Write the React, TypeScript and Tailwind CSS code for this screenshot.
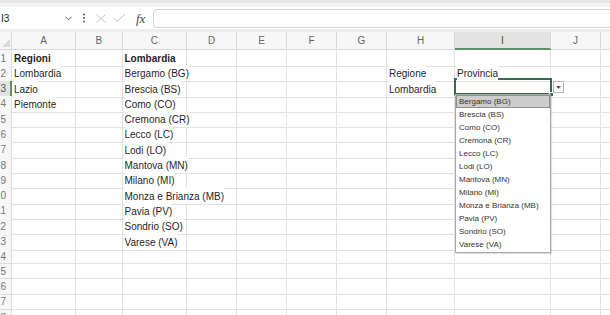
import React from "react";

const GRID =
  "grid grid-cols-[12px_64px_46.5px_64.5px_50px_50px_50px_50px_68px_96px_50px_50px]";

const letters = ["A", "B", "C", "D", "E", "F", "G", "H", "I", "J", "K"];

type Row = { [k: string]: { t: string; b?: boolean } };

const rows: Row[] = [
  { A: { t: "Regioni", b: true }, C: { t: "Lombardia", b: true } },
  { A: { t: "Lombardia" }, C: { t: "Bergamo (BG)" }, H: { t: "Regione" }, I: { t: "Provincia" } },
  { A: { t: "Lazio" }, C: { t: "Brescia (BS)" }, H: { t: "Lombardia" } },
  { A: { t: "Piemonte" }, C: { t: "Como (CO)" } },
  { C: { t: "Cremona (CR)" } },
  { C: { t: "Lecco (LC)" } },
  { C: { t: "Lodi (LO)" } },
  { C: { t: "Mantova (MN)" } },
  { C: { t: "Milano (MI)" } },
  { C: { t: "Monza e Brianza (MB)" } },
  { C: { t: "Pavia (PV)" } },
  { C: { t: "Sondrio (SO)" } },
  { C: { t: "Varese (VA)" } },
  {},
  {},
  {},
  {},
  {},
];

const provinces = [
  "Bergamo (BG)",
  "Brescia (BS)",
  "Como (CO)",
  "Cremona (CR)",
  "Lecco (LC)",
  "Lodi (LO)",
  "Mantova (MN)",
  "Milano (MI)",
  "Monza e Brianza (MB)",
  "Pavia (PV)",
  "Sondrio (SO)",
  "Varese (VA)",
];

function FormulaBar() {
  return (
    <div className="flex h-[22px] items-center bg-white">
      <div className="flex h-full w-[78px] items-center justify-between pl-[1px] pr-[6px]">
        <span className="text-[10px] text-[#222]">I3</span>
        <svg width="7" height="5" viewBox="0 0 7 5" className="mt-[1px]">
          <path d="M0.5 0.8 L3.5 3.8 L6.5 0.8" fill="none" stroke="#555" strokeWidth="1" />
        </svg>
      </div>
      <svg width="4" height="10" viewBox="0 0 4 10" className="ml-[4px]">
        <circle cx="2" cy="1.5" r="0.9" fill="#555" />
        <circle cx="2" cy="5" r="0.9" fill="#555" />
        <circle cx="2" cy="8.5" r="0.9" fill="#555" />
      </svg>
      <svg width="10" height="9" viewBox="0 0 10 9" className="ml-[10px]">
        <path d="M0.5 0.5 L9.5 8.5 M9.5 0.5 L0.5 8.5" fill="none" stroke="#c4c4c4" strokeWidth="1" />
      </svg>
      <svg width="12" height="8" viewBox="0 0 12 8" className="ml-[7px]">
        <path d="M0.5 4 L4 7.5 L11.5 0.5" fill="none" stroke="#c4c4c4" strokeWidth="1" />
      </svg>
      <span className="ml-[11px] font-['Liberation_Serif',serif] text-[13px] italic leading-none text-[#444]">
        fx
      </span>
      <div className="ml-[8px] h-[19px] flex-1 rounded-l-[4px] border border-r-0 border-[#d6d6d6] bg-white" />
    </div>
  );
}

function HeaderRow() {
  return (
    <div className={`${GRID} h-[18px] bg-[#f7f7f7]`}>
      <div className="relative border-b border-r border-[#d8d8d8]">
        <svg width="8" height="8" viewBox="0 0 8 8" className="absolute bottom-[2px] right-[1px]">
          <path d="M8 0 L8 8 L0 8 Z" fill="#dadada" />
        </svg>
      </div>
      {letters.map((l) => {
        const sel = l === "I";
        return (
          <div
            key={l}
            className={
              sel
                ? "flex items-center justify-center border-b-2 border-r border-b-[#5f8f6d] border-r-[#d8d8d8] bg-[#e3e3e3] text-[10px] text-[#444]"
                : "flex items-center justify-center border-b border-r border-[#d8d8d8] text-[10px] text-[#666]"
            }
          >
            {l}
          </div>
        );
      })}
    </div>
  );
}

function DataRow({ row, n }: { row: Row; n: number }) {
  const sel = n === 3;
  return (
    <div className={`${GRID} h-[15.3px]`}>
      <div
        className={
          sel
            ? "flex items-center justify-end overflow-hidden whitespace-nowrap border-b border-r-2 border-b-[#dcdcdc] border-r-[#5f8f6d] bg-[#e3e3e3] pr-[4px] text-[10px] text-[#555]"
            : "flex items-center justify-end overflow-hidden whitespace-nowrap border-b border-r border-[#dcdcdc] bg-[#f7f7f7] pr-[5px] text-[10px] text-[#777]"
        }
      >
        {n}
      </div>
      {letters.map((l) => {
        const c = row[l];
        return (
          <div
            key={l}
            className="flex items-center whitespace-nowrap border-b border-r border-[#e1e1e1] pl-[2px] text-[10px] text-[#1f1f1f]"
          >
            {c ? (
              <span className={c.b ? "relative z-[1] bg-white pt-[1px] font-bold" : "relative z-[1] bg-white pt-[1px]"}>
                {c.t}
              </span>
            ) : null}
          </div>
        );
      })}
    </div>
  );
}

export default function App() {
  return (
    <div className="relative h-[315px] w-[610px] overflow-hidden bg-white font-['Liberation_Sans',Arial,sans-serif]">
      <div className="h-[3px] bg-[#e6e6e6]" />
      <div className="h-[4px] bg-[#f3f3f3]" />
      <FormulaBar />
      <div className="h-[3px] bg-[#eeeeee]" />
      <HeaderRow />
      {rows.map((r, i) => (
        <DataRow key={i} row={r} n={i + 1} />
      ))}

      {/* active cell I3 */}
      <div className="absolute left-[454px] top-[78px] h-[17px] w-[98px] border-2 border-[#2f6e4b]" />
      <div className="absolute left-[549px] top-[92px] h-[5px] w-[5px] border border-white bg-[#2f6e4b]" />

      {/* dropdown button */}
      <div className="absolute left-[553px] top-[81px] flex h-[12px] w-[11px] items-center justify-center border border-[#b5b5b5] bg-white">
        <svg width="5" height="3" viewBox="0 0 5 3">
          <path d="M0 0 L5 0 L2.5 3 Z" fill="#555" />
        </svg>
      </div>

      {/* dropdown list */}
      <div className="absolute left-[455px] top-[94px] w-[96px] border border-[#a8a8a8] bg-white pb-[1px] shadow-[1px_1px_1px_rgba(0,0,0,0.12)]">
        {provinces.map((p, i) => (
          <div
            key={p}
            className={
              i === 0
                ? "flex h-[13px] items-center border border-[#8f8f8f] bg-[#cdcdcd] pl-[2px] text-[8px] text-[#333]"
                : "flex h-[13px] items-center pl-[3px] text-[8px] text-[#333]"
            }
          >
            {p}
          </div>
        ))}
      </div>
    </div>
  );
}
